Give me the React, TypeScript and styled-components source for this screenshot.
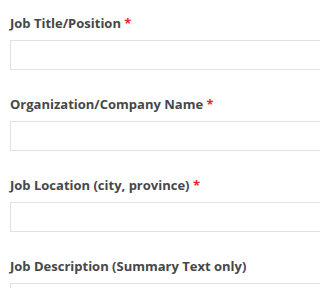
import React, { FC } from "react"
import styled, { createGlobalStyle } from "styled-components"

const GlobalStyle = createGlobalStyle`
  html, body {
    margin: 0;
    padding: 0;
    background: #fff;
  }
  body {
    font-family: "Open Sans", "Liberation Sans", sans-serif;
  }
  #root {
    height: 288px;
    overflow: hidden;
  }
`

const FormStyled = styled.form`
  padding: 14px 0 0 10px;
  width: 320px;
`

const FieldStyled = styled.div`
  margin: 0 0 25px;
`

const LabelStyled = styled.label`
  display: block;
  font-size: 13px;
  line-height: 18px;
  font-weight: 700;
  color: #474747;
  margin: 0 0 8px;
  white-space: nowrap;
`

const RequiredStyled = styled.span`
  color: #f02424;
  font-weight: 700;
`

const InputStyled = styled.input`
  display: block;
  box-sizing: border-box;
  width: 100%;
  height: 30px;
  border: 1px solid #e2e2e2;
  background: #fff;
  padding: 0 8px;
  font-family: inherit;
  font-size: 13px;
  outline: none;
`

interface IField {
  label: string
  required: boolean
}

const fields: IField[] = [
  { label: "Job Title/Position", required: true },
  { label: "Organization/Company Name", required: true },
  { label: "Job Location (city, province)", required: true },
  { label: "Job Description (Summary Text only)", required: false },
]

const App: FC = () => {
  return (
    <>
      <GlobalStyle />
      <FormStyled>
        {fields.map((field, index) => (
          <FieldStyled key={index}>
            <LabelStyled htmlFor={`field-${index}`}>
              {field.label}
              {field.required && <RequiredStyled> *</RequiredStyled>}
            </LabelStyled>
            <InputStyled id={`field-${index}`} type="text" />
          </FieldStyled>
        ))}
      </FormStyled>
    </>
  )
}

export default App
